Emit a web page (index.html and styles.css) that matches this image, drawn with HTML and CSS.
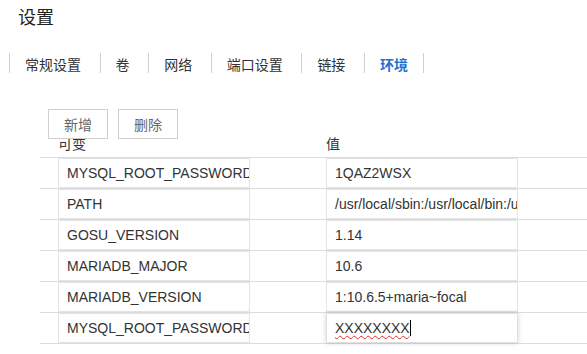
FILE: index.html
```html
<!DOCTYPE html>
<html lang="zh-CN">
<head>
<meta charset="utf-8">
<title>设置</title>
<link rel="stylesheet" href="styles.css">
</head>
<body>
<div class="page">
  <h1 class="title">设置</h1>
  <ul class="tabs">
    <li class="tab">常规设置</li>
    <li class="tab">卷</li>
    <li class="tab">网络</li>
    <li class="tab">端口设置</li>
    <li class="tab">链接</li>
    <li class="tab tab-active">环境</li>
  </ul>
  <section class="env">
    <div class="toolbar">
      <button class="btn" type="button">新增</button>
      <button class="btn" type="button">删除</button>
    </div>
    <div class="table">
      <div class="thead">
        <span class="th th-key">可变</span>
        <span class="th th-val">值</span>
      </div>
      <div class="row">
        <div class="field">MYSQL_ROOT_PASSWORD</div>
        <div class="field">1QAZ2WSX</div>
      </div>
      <div class="row">
        <div class="field">PATH</div>
        <div class="field">/usr/local/sbin:/usr/local/bin:/usr/sbin:/usr/bin:/sbin:/bin</div>
      </div>
      <div class="row">
        <div class="field">GOSU_VERSION</div>
        <div class="field">1.14</div>
      </div>
      <div class="row">
        <div class="field">MARIADB_MAJOR</div>
        <div class="field">10.6</div>
      </div>
      <div class="row">
        <div class="field">MARIADB_VERSION</div>
        <div class="field">1:10.6.5+maria~focal</div>
      </div>
      <div class="row row-last">
        <div class="field">MYSQL_ROOT_PASSWORD</div>
        <div class="field field-focus"><span class="misspelled">XXXXXXXX</span><span class="caret"></span></div>
      </div>
    </div>
  </section>
</div>
</body>
</html>
```
FILE: styles.css
```css
* { box-sizing: border-box; }
html, body { margin: 0; padding: 0; background: #fff; }
body {
  font-family: "Noto Sans CJK SC", "Liberation Sans", sans-serif;
  color: #333;
  overflow: hidden;
}
.page { width: 587px; height: 354px; }
.title {
  margin: 0 0 0 18px;
  padding-top: 7px;
  font-size: 18px;
  line-height: 18px;
  font-weight: normal;
  color: #222;
}
.tabs {
  list-style: none;
  margin: 28px 0 0 9px;
  padding: 0;
  display: flex;
}
.tab {
  border-left: 1px solid #d0d0d0;
  padding: 0 15px;
  margin-right: 3.6px;
  font-size: 14px;
  line-height: 22px;
  height: 20px;
  color: #333;
}
.tab-active {
  color: #1d6fd0;
  font-weight: bold;
  margin-right: 0;
  border-right: 1px solid #d0d0d0;
}
.env { margin: 36px 0 0 40px; }
.toolbar {
  display: flex;
  gap: 10px;
  margin-left: 8px;
  height: 30px;
}
.btn {
  position: relative;
  z-index: 1;
  width: 60px;
  height: 30px;
  border: 1px solid #cfcfcf;
  background: #fff;
  color: #666;
  font-family: "Noto Sans CJK SC", sans-serif;
  font-size: 14px;
  padding: 0;
  border-radius: 0;
}
.thead {
  margin-top: -5px;
  height: 23px;
  padding-top: 1px;
  display: grid;
  grid-template-columns: 18px 268px 1fr;
  font-size: 14px;
  line-height: 16px;
  color: #333;
}
.th-key { grid-column: 2; }
.th-val { grid-column: 3; }
.row {
  border-top: 1px solid #dcdcdc;
  height: 31px;
  display: grid;
  grid-template-columns: 18px 268px 1fr;
  width: 560px;
}
.row-last { border-bottom: 1px solid #dcdcdc; height: 32px; }
.field {
  width: 192px;
  height: 30px;
  border: 1px solid #e4e4e4;
  padding-left: 8px;
  font-family: "Liberation Sans", Arial, sans-serif;
  font-size: 14px;
  line-height: 28px;
  color: #333;
  white-space: nowrap;
  overflow: hidden;
  background: #fff;
}
.row .field:first-child { grid-column: 2; }
.row .field:last-child { grid-column: 3; }
.field-focus {
  box-shadow: 0 0 5px rgba(0, 0, 0, 0.18);
  border-color: #e0e0e0;
}
.misspelled {
  text-decoration: underline wavy #e03030;
  text-decoration-thickness: 1px;
  text-underline-offset: 2px;
}
.caret {
  display: inline-block;
  width: 1px;
  height: 16px;
  background: #000;
  vertical-align: -3px;
}
```
